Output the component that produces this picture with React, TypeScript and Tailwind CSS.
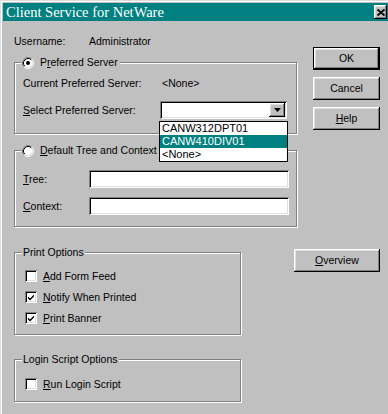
import React from "react";

const etched =
  "border border-[#808080] shadow-[inset_1px_1px_0_#fff,1px_1px_0_#fff]";
const sunken =
  "bg-white shadow-[inset_1px_1px_0_#808080,inset_-1px_-1px_0_#fff,inset_2px_2px_0_#000,inset_-2px_-2px_0_#dfdfdf]";
const raised =
  "bg-[#c0c0c0] shadow-[inset_-1px_-1px_0_#000,inset_1px_1px_0_#fff,inset_-2px_-2px_0_#808080,inset_2px_2px_0_#dfdfdf]";

function U({ children }: { children: React.ReactNode }) {
  return <span className="underline decoration-1 underline-offset-[1px]">{children}</span>;
}

function Radio({ checked }: { checked?: boolean }) {
  return (
    <svg width="12" height="12" viewBox="0 0 12 12" className="shrink-0">
      <circle cx="6" cy="6" r="4.5" fill="#fff" />
      <path d="M2.11 9.89 A5.5 5.5 0 0 1 9.89 2.11" stroke="#808080" fill="none" />
      <path d="M9.89 2.11 A5.5 5.5 0 0 1 2.11 9.89" stroke="#fff" fill="none" />
      <path d="M2.82 9.18 A4.5 4.5 0 0 1 9.18 2.82" stroke="#000" fill="none" />
      <path d="M9.18 2.82 A4.5 4.5 0 0 1 2.82 9.18" stroke="#dfdfdf" fill="none" />
      {checked && <circle cx="6" cy="6" r="2" fill="#000" />}
    </svg>
  );
}

function Check({ checked }: { checked?: boolean }) {
  return (
    <div className={`w-[12px] h-[12px] shrink-0 flex items-center justify-center ${sunken}`}>
      {checked && (
        <svg width="8" height="8" viewBox="0 0 8 8">
          <path d="M1 3.5 L3 5.5 L7 1.5 L7 3.5 L3 7.5 L1 5.5 Z" fill="#000" />
        </svg>
      )}
    </div>
  );
}

function Btn({
  children,
  w,
  isDefault,
  className = "",
}: {
  children: React.ReactNode;
  w: string;
  isDefault?: boolean;
  className?: string;
}) {
  return (
    <div
      className={`${w} h-[23px] flex items-center justify-center ${raised} ${
        isDefault ? "border border-black" : ""
      } ${className}`}
    >
      {children}
    </div>
  );
}

export default function App() {
  return (
    <div className="w-[388px] h-[414px] overflow-hidden bg-[#c0c0c0] shadow-[inset_1px_1px_0_#dfdfdf,inset_2px_2px_0_#fff] pt-[3px] pl-[3px] font-['Liberation_Sans',Arial,sans-serif] text-[10.5px] leading-[13px] text-black">
      {/* Title bar */}
      <div className="h-[18px] bg-[#008080] flex items-center justify-between pl-[3px] pr-[1px]">
        <span className="font-['Liberation_Serif','Times_New_Roman',serif] text-[14.5px] leading-[18px] text-white">
          Client Service for NetWare
        </span>
        <div className={`w-[13px] h-[14px] flex items-center justify-center ${raised}`}>
          <svg width="8" height="7" viewBox="0 0 8 7">
            <path d="M0.5 0.5 L7.5 6.5 M7.5 0.5 L0.5 6.5" stroke="#000" strokeWidth="1.8" />
          </svg>
        </div>
      </div>

      <div className="flex">
        {/* Left column */}
        <div className="ml-[11px] w-[283px] flex flex-col">
          <div className="mt-[14px] flex h-[13px]">
            <span className="w-[75px]">Username:</span>
            <span>Administrator</span>
          </div>

          {/* Preferred Server */}
          <div className={`relative mt-[14px] ${etched} pt-[14px] pb-[14px] pl-[8px]`}>
            <div className="absolute -top-[7px] left-[6px] pl-[1px] pr-[2px] bg-[#c0c0c0] flex items-center gap-[6px] h-[13px]">
              <Radio checked />
              <span>
                P<U>r</U>eferred Server
              </span>
            </div>
            <div className="flex h-[13px]">
              <span className="w-[139px]">Current Preferred Server:</span>
              <span>&lt;None&gt;</span>
            </div>
            <div className="flex items-center mt-[11px]">
              <span className="w-[137px]">
                <U>S</U>elect Preferred Server:
              </span>
              <div className={`relative w-[127px] h-[18px] flex justify-end p-[2px] ${sunken}`}>
                <div className={`w-[16px] h-[14px] flex items-center justify-center ${raised}`}>
                  <svg width="7" height="4" viewBox="0 0 7 4">
                    <path d="M0 0 H7 L3.5 4 Z" fill="#000" />
                  </svg>
                </div>
                <div className="absolute top-[20px] -left-[1px] w-[129px] border border-black bg-white z-10 flex flex-col text-[11px]">
                  <div className="h-[13px] leading-[13px] pl-[2px]">CANW312DPT01</div>
                  <div className="h-[13px] leading-[13px] pl-[2px] bg-[#008080] text-white">CANW410DIV01</div>
                  <div className="h-[13px] leading-[13px] pl-[2px]">&lt;None&gt;</div>
                </div>
              </div>
            </div>
          </div>

          {/* Default Tree and Context */}
          <div className={`relative mt-[16px] ${etched} pt-[19px] pb-[11px] pl-[8px] flex flex-col gap-[9px]`}>
            <div className="absolute -top-[7px] left-[6px] pl-[1px] pr-[2px] bg-[#c0c0c0] flex items-center gap-[6px] h-[13px]">
              <Radio />
              <span>
                <U>D</U>efault Tree and Context
              </span>
            </div>
            <div className="flex items-center">
              <span className="w-[66px]">
                <U>T</U>ree:
              </span>
              <div className={`w-[200px] h-[18px] ${sunken}`} />
            </div>
            <div className="flex items-center">
              <span className="w-[66px]">
                <U>C</U>ontext:
              </span>
              <div className={`w-[200px] h-[18px] ${sunken}`} />
            </div>
          </div>

          {/* Print Options */}
          <div className={`relative mt-[25px] w-[227px] ${etched} pt-[16px] pb-[9px] pl-[10px] flex flex-col gap-[7px]`}>
            <div className="absolute -top-[7px] left-[7px] px-[1px] bg-[#c0c0c0] h-[13px]">Print Options</div>
            <div className="flex items-center gap-[6px] h-[14px]">
              <Check />
              <span>
                <U>A</U>dd Form Feed
              </span>
            </div>
            <div className="flex items-center gap-[6px] h-[14px]">
              <Check checked />
              <span>
                <U>N</U>otify When Printed
              </span>
            </div>
            <div className="flex items-center gap-[6px] h-[14px]">
              <Check checked />
              <span>
                <U>P</U>rint Banner
              </span>
            </div>
          </div>

          {/* Login Script Options */}
          <div className={`relative mt-[24px] w-[227px] ${etched} pt-[17px] pb-[10px] pl-[10px]`}>
            <div className="absolute -top-[7px] left-[7px] px-[1px] bg-[#c0c0c0] h-[13px]">Login Script Options</div>
            <div className="flex items-center gap-[6px] h-[14px]">
              <Check />
              <span>
                <U>R</U>un Login Script
              </span>
            </div>
          </div>
        </div>

        {/* Right column */}
        <div className="-ml-[3px] w-[86px] flex flex-col items-end">
          <Btn w="w-[67px]" isDefault className="mt-[26px]">
            OK
          </Btn>
          <Btn w="w-[67px]" className="mt-[7px]">
            Cancel
          </Btn>
          <Btn w="w-[67px]" className="mt-[7px]">
            <U>H</U>elp
          </Btn>
          <Btn w="w-[86px]" className="mt-[119px]">
            <U>O</U>verview
          </Btn>
        </div>
      </div>
    </div>
  );
}
